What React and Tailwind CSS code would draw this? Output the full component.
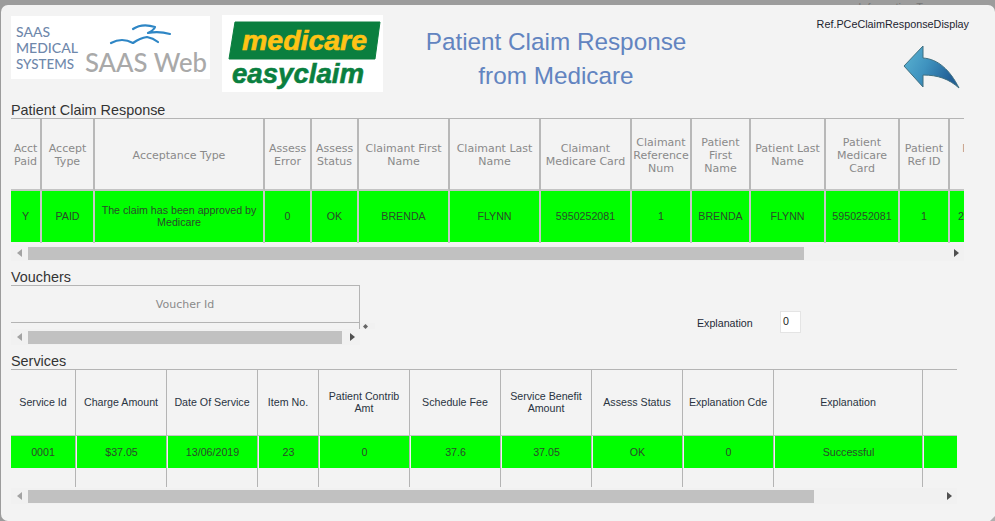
const sans = { fontFamily: '"Liberation Sans", Arial, sans-serif' };

const claimCols = [
  [31, 'Acct Paid', 'Y'],
  [53, 'Accept Type', 'PAID'],
  [170, 'Acceptance Type', 'The claim has been approved by Medicare'],
  [47, 'Assess Error', '0'],
  [47, 'Assess Status', 'OK'],
  [91, 'Claimant First Name', 'BRENDA'],
  [91, 'Claimant Last Name', 'FLYNN'],
  [91, 'Claimant Medicare Card', '5950252081'],
  [60, 'Claimant Reference Num', '1'],
  [59, 'Patient First Name', 'BRENDA'],
  [75, 'Patient Last Name', 'FLYNN'],
  [74, 'Patient Medicare Card', '5950252081'],
  [50, 'Patient Ref ID', '1'],
  [65, 'Patient DOB', '23/05/1950'],
];

const serviceCols = [
  [65, 'Service Id', '0001'],
  [91, 'Charge Amount', '$37.05'],
  [91, 'Date Of Service', '13/06/2019'],
  [61, 'Item No.', '23'],
  [91, 'Patient Contrib Amt', '0'],
  [91, 'Schedule Fee', '37.6'],
  [91, 'Service Benefit Amount', '37.05'],
  [91, 'Assess Status', 'OK'],
  [91, 'Explanation Cde', '0'],
  [149, 'Explanation', 'Successful'],
  [60, '', ''],
];

function ScrollBar({ width, thumbWidth }) {
  return (
    <div className="flex items-center bg-[#f1f1f1] h-[16px]" style={{ width }}>
      <div className="w-[17px] flex justify-center shrink-0">
        <svg width="6" height="8" viewBox="0 0 6 8"><polygon points="5,0 5,8 0,4" fill="#a3a3a3" /></svg>
      </div>
      <div className="h-[13px] bg-[#c1c1c1]" style={{ width: thumbWidth }} />
      <div className="flex-1" />
      <div className="w-[17px] flex justify-center shrink-0">
        <svg width="6" height="8" viewBox="0 0 6 8"><polygon points="1,0 1,8 6,4" fill="#505050" /></svg>
      </div>
    </div>
  );
}

function ClaimTable() {
  const last = claimCols.length - 1;
  return (
    <div className="w-[953px] overflow-hidden">
      <div className="flex w-max border-t border-[#b4b4b4] h-[73px]">
        {claimCols.map(([w, h]) => (
          <div key={h} style={{ width: w }} className="shrink-0 border-r-2 border-[#b8b8b8] border-b-2 border-b-[#c4c4c4] flex items-center justify-center text-center text-[#8a8a8a] text-[11px] leading-[13px] px-[1px] pt-[2px] font-['DejaVu_Sans']">
            {h}
          </div>
        ))}
      </div>
      <div className="flex w-max h-[52px]">
        {claimCols.map(([w, h, v], i) => (
          <div key={h} style={{ width: w }} className="shrink-0 border-r-2 border-[#c8c8c8] pb-[1px]">
            <div className={i === last
              ? 'h-full bg-[#00ff00] flex items-center justify-start whitespace-nowrap text-[10.67px] leading-[12px] text-[#2b4a2b] pl-[8px] pb-[2px]'
              : 'h-full bg-[#00ff00] flex items-center justify-center text-center text-[10.67px] leading-[12px] text-[#2b4a2b] px-[4px] pb-[2px]'}>
              {v}
            </div>
          </div>
        ))}
      </div>
    </div>
  );
}

function ServiceTable() {
  return (
    <div className="w-[946px] overflow-hidden">
      <div className="flex w-max border-t border-[#b4b4b4] h-[67px]">
        {serviceCols.map(([w, h], i) => (
          <div key={i} style={{ width: w }} className="shrink-0 border-r border-[#b4b4b4] border-b border-b-[#c4c4c4] flex items-center justify-center text-center text-[#2a3442] text-[10.67px] leading-[12px] px-[2px] pb-[2px]">
            {h}
          </div>
        ))}
      </div>
      <div className="flex w-max h-[51px]">
        {serviceCols.map(([w, h, v], i) => (
          <div key={i} style={{ width: w }} className={i === 0 ? 'shrink-0 border-r border-[#b4b4b4]' : 'shrink-0 border-r border-[#b4b4b4] pl-[1px]'}>
            <div className="h-[32px] bg-[#00ff00] flex items-center justify-center text-[10.67px] text-[#2b4a2b]">
              {v}
            </div>
          </div>
        ))}
      </div>
    </div>
  );
}

function SaasLogo() {
  return (
    <div className="w-[199px] h-[63px] bg-white shrink-0">
      <svg width="199" height="63" viewBox="0 0 199 63">
        <g fontFamily='"Lato", "Liberation Sans", sans-serif' fill="#6f88ab" fontSize="13" fontWeight="500">
          <text x="5" y="21" textLength="34" lengthAdjust="spacingAndGlyphs">SAAS</text>
          <text x="5" y="37" textLength="62" lengthAdjust="spacingAndGlyphs">MEDICAL</text>
          <text x="5" y="53" textLength="58" lengthAdjust="spacingAndGlyphs">SYSTEMS</text>
        </g>
        <text x="74" y="56" fontFamily='"Lato", "Liberation Sans", sans-serif' fontSize="26" fontWeight="500" fill="#a9a9a9" textLength="122" lengthAdjust="spacingAndGlyphs">SAAS Web</text>
        <g fill="none" stroke="#2e86c5" strokeWidth="2.2" strokeLinecap="round" strokeLinejoin="round">
          <path d="M100 27 Q111 21 122 27 Q129 22 136 21 Q142 22 147 26" />
          <path d="M122 13 Q131 7 144 11 Q143 14 137 17 Q148 15 159 18" />
        </g>
      </svg>
    </div>
  );
}

function MedicareLogo() {
  return (
    <div className="w-[161px] h-[77px] bg-white shrink-0 -mt-[1px]">
      <svg width="161" height="77" viewBox="0 0 161 77">
        <polygon points="13,7 158,7 153,44 7,44" fill="#0a7f3f" stroke="#0a7f3f" strokeWidth="1" strokeLinejoin="round" />
        <text x="20" y="35" fontFamily='"Liberation Sans", sans-serif' fontWeight="700" fontStyle="italic" fontSize="28" fill="#ffc316" stroke="#ffc316" strokeWidth="0.6" textLength="125" lengthAdjust="spacingAndGlyphs">medicare</text>
        <text x="10" y="68" fontFamily='"Liberation Sans", sans-serif' fontWeight="700" fontStyle="italic" fontSize="28" fill="#0a7f3f" stroke="#0a7f3f" strokeWidth="0.6" textLength="132" lengthAdjust="spacingAndGlyphs">easyclaim</text>
      </svg>
    </div>
  );
}

function BackArrow() {
  return (
    <svg width="60" height="46" viewBox="0 0 60 46" className="block">
      <defs>
        <linearGradient id="arrow" x1="0" y1="0" x2="1" y2="0.4">
          <stop offset="0" stopColor="#5db4d2" />
          <stop offset="0.5" stopColor="#3f93bf" />
          <stop offset="1" stopColor="#225f96" />
        </linearGradient>
      </defs>
      <path d="M2 22 L21 2 L21 14 C36 15 48 26 57 44 C47 35 36 31 21 31 L21 43 Z" fill="url(#arrow)" stroke="#3f6f80" strokeWidth="1" strokeLinejoin="round" />
    </svg>
  );
}

export default function App() {
  return (
    <div style={sans} className="w-[995px] h-[521px] overflow-hidden bg-[#9c9c9c] flex flex-col pl-[1px]">
      <div className="h-[5px] shrink-0 overflow-hidden flex justify-end pr-[55px]">
        <span className="text-[11px] leading-[11px] mt-[2px] text-[#777]">Information Type</span>
      </div>
      <div className="flex-1 bg-[#f3f3f3] rounded-tl-[7px] rounded-tr-[7px] rounded-bl-[7px] pl-[10px] flex flex-col relative">
        <header className="h-[94px] flex relative">
          <div className="pt-[11px] flex gap-[12px]">
            <SaasLogo />
            <MedicareLogo />
          </div>
          <div className="w-[290px] ml-[28px] pt-[20px] text-center text-[24.3px] leading-[34px] text-[#6284c0]">
            Patient Claim Response<br />from Medicare
          </div>
          <div className="absolute right-[26px] top-[11px] text-[10.8px] text-[#1c2430]">Ref.PCeClaimResponseDisplay</div>
          <div className="absolute left-[891px] top-[39px]"><BackArrow /></div>
        </header>

        <h2 className="text-[14.4px] leading-[16px] text-[#333] h-[16px] mt-[3px]">Patient Claim Response</h2>
        <ClaimTable />
        <div className="mt-[2px]"><ScrollBar width={953} thumbWidth={776} /></div>

        <h2 className="text-[14.4px] leading-[16px] text-[#333] h-[16px] mt-[8px]">Vouchers</h2>
        <div className="flex items-start h-[60px] relative">
          <div className="w-[349px]">
            <div className="h-[44px] overflow-hidden border-r border-[#b4b4b4]">
              <div className="border-t border-b border-[#b4b4b4] h-[38px] flex items-center justify-center text-[11px] text-[#8a8a8a] pt-[2px] font-['DejaVu_Sans']">Voucher Id</div>
              <div className="text-center text-[10.67px] leading-[12px] text-[#333] mt-[4px]">01</div>
            </div>
            <ScrollBar width={349} thumbWidth={314} />
          </div>
          <div className="mt-[38px] w-[15px] h-[6px] bg-[#f1f1f1] flex items-center pl-[3px]">
            <svg width="5" height="5" viewBox="0 0 5 5"><polygon points="2.5,0 5,2.5 2.5,5 0,2.5" fill="#666" /></svg>
          </div>
          <span className="absolute left-[686px] top-[32px] text-[10.67px] leading-[12px] text-[#1f2a38]">Explanation</span>
          <div className="absolute left-[769px] top-[26px] w-[21px] h-[22px] bg-white border border-[#e4e4e4] text-[10.67px] leading-[18px] pl-[2px] text-[#222]">0</div>
        </div>

        <h2 className="text-[14.4px] leading-[16px] text-[#333] h-[16px] mt-[8px]">Services</h2>
        <ServiceTable />
        <div className="mt-[1px]"><ScrollBar width={946} thumbWidth={786} /></div>

        <svg width="5" height="5" viewBox="0 0 5 5" className="absolute right-0 bottom-0">
          <polygon points="5,0 5,5 0,5" fill="#b0b0b0" />
        </svg>
      </div>
    </div>
  );
}
